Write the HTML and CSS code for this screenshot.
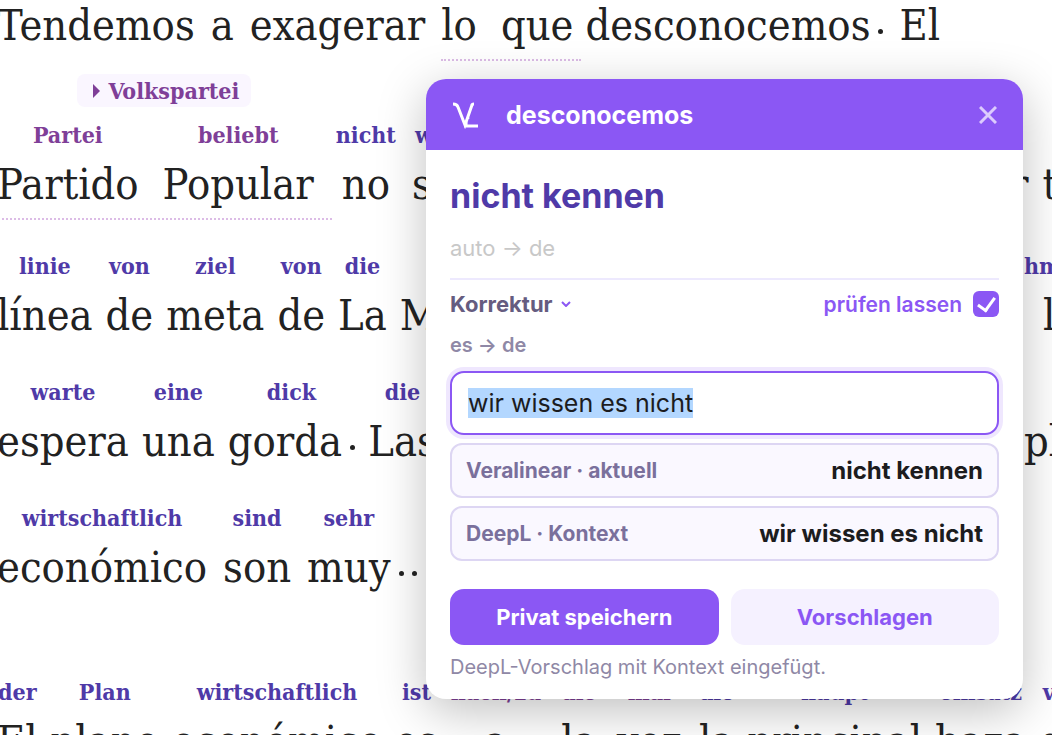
FILE: index.html
```html
<!DOCTYPE html>
<html lang="es">
<head>
    <meta charset="UTF-8">
    <meta name="viewport" content="width=device-width, initial-scale=1.0">
    <title>Veralinear</title>
    <link rel="stylesheet" href="styles.css">
</head>
<body>
    <main class="reader">
        <div class="row row-phrase">
            <span class="word">Tendemos</span>
            <span class="word">a</span>
            <span class="word">exagerar</span>
            <div class="phrase">
                <div class="phrase-words phrase-short">
                    <span class="word">lo</span>
                    <span class="word">que</span>
                </div>
            </div>
            <span class="word">desconocemos<i class="dot"></i></span>
            <span class="word">El</span>
        </div>

        <div class="row row-phrase row-chip">
            <div class="phrase">
                <button type="button" class="chip"><span class="chip-arrow"></span>Volkspartei</button>
                <div class="phrase-words">
                    <span class="word"><small class="idiom">Partei</small>Partido</span>
                    <span class="word"><small class="idiom">beliebt</small>Popular</span>
                </div>
            </div>
            <span class="word"><small>nicht</small>no</span>
            <span class="word"><small>wir</small>se</span>
            <div class="phrase">
                <button type="button" class="chip"><span class="chip-arrow"></span>tun</button>
                <div class="phrase-words">
                    <span class="word">puede</span>
                    <span class="word">dar</span>
                </div>
            </div>
            <div class="row-end">
                <span class="word">r</span>
                <span class="word">tan</span>
            </div>
        </div>

        <div class="row">
            <span class="word"><small>linie</small>línea</span>
            <span class="word"><small>von</small>de</span>
            <span class="word"><small>ziel</small>meta</span>
            <span class="word"><small>von</small>de</span>
            <span class="word"><small>die</small>La</span>
            <span class="word">M</span>
            <div class="row-end row-end-narrow">
                <span class="word"><small>hme</small>l</span>
            </div>
        </div>

        <div class="row">
            <span class="word"><small>warte</small>espera</span>
            <span class="word"><small>eine</small>una</span>
            <span class="word"><small>dick</small>gorda<i class="dot"></i></span>
            <span class="word"><small>die</small>Las</span>
            <div class="row-end row-end-narrow">
                <span class="word">pl</span>
            </div>
        </div>

        <div class="row row-wide">
            <span class="word"><small>wirtschaftlich</small>económico</span>
            <span class="word"><small>sind</small>son</span>
            <span class="word"><small>sehr</small>muy</span>
            <span class="word ellipsis"><i class="dot"></i><i class="dot"></i></span>
        </div>

        <div class="row row-paragraph">
            <span class="word"><small>der</small>El</span>
            <span class="word"><small>Plan</small>plano</span>
            <span class="word"><small>wirtschaftlich</small>económico</span>
            <span class="word"><small>ist</small>es</span>
            <div class="phrase">
                <div class="phrase-words">
                    <span class="word"><small class="idiom">nach/zu</small>a</span>
                    <span class="word"><small class="idiom">die</small>la</span>
                    <span class="word"><small class="idiom">mal</small>vez</span>
                </div>
            </div>
            <span class="word"><small>die</small>la</span>
            <span class="word"><small>haupt</small>principal</span>
            <span class="word"><small>einsatz</small>baza</span>
            <span class="word"><small>von</small>de</span>
        </div>
    </main>

    <section class="popup">
        <header class="popup-header">
            <svg class="logo" viewBox="0 0 28 28" aria-hidden="true">
                <path d="M1 3 Q5 3 6 6 L13 24 L20 4 Q20 3 22 3 M14 24 C14 21 15 17 17 16 M12 25 H26" />
            </svg>
            <h1>desconocemos</h1>
            <button type="button" class="close" aria-label="Schließen">
                <svg viewBox="0 0 18 18"><path d="M1 1 L17 17 M17 1 L1 17" /></svg>
            </button>
        </header>

        <div class="popup-body">
            <h2>nicht kennen</h2>
            <p class="langs">auto → de</p>

            <form class="correction">
                <div class="correction-top">
                    <button type="button" class="toggle">Korrektur
                        <svg viewBox="0 0 10 6"><path d="M1 1 L5 5 L9 1" /></svg>
                    </button>
                    <label class="check" for="review">prüfen lassen
                        <input type="checkbox" id="review" checked>
                    </label>
                </div>
                <label class="pair" for="translation">es → de</label>
                <input type="text" id="translation" class="field" value="wir wissen es nicht">

                <button type="button" class="option"><span>Veralinear · aktuell</span><b>nicht kennen</b></button>
                <button type="button" class="option"><span>DeepL · Kontext</span><b>wir wissen es nicht</b></button>

                <div class="actions">
                    <button type="submit" class="save">Privat speichern</button>
                    <button type="button" class="suggest">Vorschlagen</button>
                </div>
                <p class="status">DeepL-Vorschlag mit Kontext eingefügt.</p>
            </form>
        </div>
    </section>

    <script>
        const field = document.getElementById('translation');
        field.focus();
        field.select();
    </script>
</body>
</html>
```
FILE: styles.css
```css
* {
    box-sizing: border-box;
}
body {
    margin: 0;
    height: 100vh;
    overflow: hidden;
    position: relative;
    background: #fff;
    font-family: Inter, sans-serif;
}
button, input {
    font-family: inherit;
}
button {
    border: none;
    cursor: pointer;
}

/* interlinear text */
.reader {
    margin: -9px 0 0 -3px;
    font-family: "DejaVu Serif Condensed", "DejaVu Serif", serif;
    font-size: 43px;
    line-height: 68px;
    color: #222;
}
.row {
    display: flex;
    align-items: flex-end;
    gap: 13px;
    margin-top: 28px;
    white-space: nowrap;
}
.row:first-child {
    margin-top: 0;
}
.row-phrase {
    gap: 16px;
    padding-bottom: 5px;
}
.row-wide {
    gap: 16px;
}
.row-chip {
    margin-top: 10px;
}
.row-paragraph {
    margin-top: 76px;
}
.row-end {
    display: flex;
    gap: 14px;
    width: 42px;
    margin-left: auto;
}
.row-end-narrow {
    width: 28px;
}
.word {
    text-align: center;
    flex: none;
}
.word small {
    display: block;
    font-size: 23px;
    line-height: 30px;
    font-weight: bold;
    color: #4f3aa8;
}
.word .idiom {
    color: #7f3f98;
}
.dot {
    display: inline-block;
    width: 5px;
    height: 5px;
    margin: 0 0 6px 8px;
    border-radius: 50%;
    background: #222;
}
.ellipsis {
    margin-left: -16px;
}
.phrase {
    display: flex;
    flex-direction: column;
    align-items: center;
    margin: 0 -12px -2px 0;
}
.phrase-words {
    display: flex;
    gap: 24px;
    padding-right: 18px;
    border-bottom: 2px dotted #dcbce6;
}
.phrase-short {
    padding-right: 8px;
}
.row-paragraph .phrase-words {
    gap: 20px;
    padding-right: 16px;
}
.chip {
    display: flex;
    align-items: center;
    gap: 8px;
    height: 33px;
    margin-bottom: 13px;
    padding: 0 12px 0 16px;
    border-radius: 8px;
    background: #faf6ff;
    color: #7f3f98;
    font-family: inherit;
    font-size: 23px;
    font-weight: bold;
}
.chip-arrow {
    border: 7px solid transparent;
    border-left-color: #7f3f98;
    border-right: none;
}

/* translation popup */
.popup {
    position: absolute;
    top: 79px;
    right: 29px;
    width: 597px;
    border-radius: 20px;
    overflow: hidden;
    background: #fff;
    box-shadow: 0 12px 48px rgba(0, 0, 0, 0.25);
}
.popup-header {
    display: flex;
    align-items: center;
    height: 71px;
    padding: 0 24px;
    background: #8b57f4;
    color: #fff;
}
.logo {
    width: 32px;
    height: 28px;
    fill: none;
    stroke: #fff;
    stroke-width: 3;
}
.popup-header h1 {
    flex: 1;
    margin: 0 0 0 24px;
    font-size: 25px;
    line-height: 32px;
    font-weight: 700;
}
.close {
    display: flex;
    padding: 2px;
    background: none;
}
.close svg {
    width: 18px;
    height: 18px;
    stroke: #dccbfd;
    stroke-width: 3;
}
.popup-body {
    padding: 24px 24px 18px;
}
.popup-body h2 {
    margin: 0;
    font-size: 34px;
    line-height: 44px;
    font-weight: 700;
    color: #4f3aa8;
}
.langs {
    margin: 16px 0;
    font-size: 22px;
    line-height: 28px;
    color: #c8c8c8;
}
.correction {
    border-top: 2px solid #ede9fe;
    padding-top: 9px;
}
.correction-top {
    display: flex;
    justify-content: space-between;
    align-items: center;
    height: 30px;
}
.toggle {
    display: flex;
    align-items: center;
    gap: 8px;
    padding: 0;
    background: none;
    font-size: 22px;
    font-weight: 700;
    color: #655c80;
}
.toggle svg {
    width: 10px;
    height: 6px;
    fill: none;
    stroke: #8b57f4;
    stroke-width: 2;
}
.check {
    display: flex;
    align-items: center;
    gap: 11px;
    font-size: 21px;
    font-weight: 600;
    color: #8b57f4;
}
.check input {
    appearance: none;
    width: 26px;
    height: 26px;
    margin: 0;
    border-radius: 6px;
    background: #8b57f4;
    display: grid;
    place-items: center;
}
.check input:checked::before {
    content: "";
    width: 8px;
    height: 14px;
    margin-bottom: 4px;
    border: solid #fff;
    border-width: 0 3px 3px 0;
    transform: rotate(36deg);
}
.pair {
    display: block;
    margin: 12px 0;
    font-size: 20px;
    line-height: 28px;
    font-weight: 600;
    color: #8f88a6;
}
.field {
    display: block;
    width: 100%;
    height: 64px;
    padding: 0 16px;
    border: 2px solid #8b57f4;
    border-radius: 14px;
    outline: none;
    box-shadow: 0 0 0 4px #efe7fe;
    font-size: 25px;
    color: #1c1c1e;
}
.field::selection {
    background: #b3d7ff;
    color: #1c1c1e;
}
.option {
    display: flex;
    justify-content: space-between;
    align-items: center;
    width: 100%;
    height: 55px;
    margin-top: 8px;
    padding: 0 14px;
    border: 2px solid #ddd6f3;
    border-radius: 12px;
    background: #faf8ff;
    font-size: 21px;
    font-weight: 700;
    color: #7a709c;
}
.option b {
    font-size: 24px;
    font-weight: 700;
    color: #1c1c1e;
}
.actions {
    display: grid;
    grid-template-columns: 1fr 1fr;
    gap: 12px;
    margin-top: 28px;
}
.actions button {
    height: 56px;
    border-radius: 14px;
    font-size: 22px;
    font-weight: 700;
}
.save {
    background: #8b57f4;
    color: #fff;
}
.suggest {
    background: #f5f1ff;
    color: #8b57f4;
}
.status {
    margin: 8px 0 0;
    font-size: 20px;
    line-height: 28px;
    color: #8f88a6;
}
```
